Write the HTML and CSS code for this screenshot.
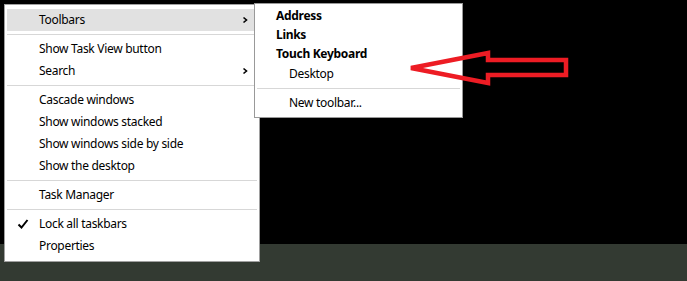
FILE: index.html
```html
<!DOCTYPE html>
<html lang="en">
<head>
    <meta charset="UTF-8">
    <meta name="viewport" content="width=device-width, initial-scale=1.0">
    <title>Taskbar Context Menu</title>
    <link rel="stylesheet" href="styles.css">
</head>
<body>
    <div class="screen">
        <div class="desktop"></div>
        <div class="taskbar"></div>

        <div class="menu main-menu">
            <div class="menu-item active">
                <span>Toolbars</span>
                <svg class="chevron" width="6" height="8" viewBox="0 0 6 8"><path d="M1.5 1.5 L4.5 4 L1.5 6.5" fill="none" stroke="#000" stroke-width="1.6"/></svg>
            </div>
            <div class="separator"></div>
            <div class="menu-item"><span>Show Task View button</span></div>
            <div class="menu-item">
                <span>Search</span>
                <svg class="chevron" width="6" height="8" viewBox="0 0 6 8"><path d="M1.5 1.5 L4.5 4 L1.5 6.5" fill="none" stroke="#000" stroke-width="1.6"/></svg>
            </div>
            <div class="separator"></div>
            <div class="menu-item"><span>Cascade windows</span></div>
            <div class="menu-item"><span>Show windows stacked</span></div>
            <div class="menu-item"><span>Show windows side by side</span></div>
            <div class="menu-item"><span>Show the desktop</span></div>
            <div class="separator"></div>
            <div class="menu-item"><span>Task Manager</span></div>
            <div class="separator"></div>
            <div class="menu-item">
                <svg class="check" width="12" height="12" viewBox="0 0 12 12"><path d="M1.5 6.5 L4.5 9.5 L10.5 2" fill="none" stroke="#000" stroke-width="2"/></svg>
                <span>Lock all taskbars</span>
            </div>
            <div class="menu-item"><span>Properties</span></div>
        </div>

        <div class="menu sub-menu">
            <div class="sub-item bold">Address</div>
            <div class="sub-item bold">Links</div>
            <div class="sub-item bold">Touch Keyboard</div>
            <div class="sub-item plain tall">Desktop</div>
            <div class="separator"></div>
            <div class="sub-item plain tall">New toolbar...</div>
        </div>

        <svg class="arrow" width="687" height="281" viewBox="0 0 687 281">
            <polygon points="411,68 488,53 488,60 566,60 566,75 488,75 488,83"
                     fill="none" stroke="#ed1c24" stroke-width="4.5"/>
        </svg>
    </div>
</body>
</html>
```

FILE: styles.css
```css
body {
    margin: 0;
    background-color: #000;
}
.screen {
    position: relative;
    width: 687px;
    height: 281px;
    display: flex;
    flex-direction: column;
    overflow: hidden;
    font-family: "Noto Sans", "Open Sans", sans-serif;
    font-size: 12px;
    letter-spacing: -0.3px;
    color: #000;
}
.desktop {
    height: 244px;
    background-color: #000;
}
.taskbar {
    flex: 1;
    background-color: #333a32;
}
.menu {
    position: absolute;
    background-color: #fff;
    border: 1px solid #a0a0a0;
    box-sizing: border-box;
}
.main-menu {
    left: 4px;
    top: 4px;
    width: 256px;
    height: 258px;
    padding: 4px 2px;
}
.sub-menu {
    left: 254px;
    top: 3px;
    width: 209px;
    height: 115px;
    padding: 2px 2px 3px 2px;
    border-color: #999;
}
.menu-item {
    position: relative;
    display: flex;
    align-items: center;
    height: 22px;
    padding-left: 32px;
    padding-bottom: 1px;
    box-sizing: border-box;
}
.menu-item.active {
    background-color: #e1e1e1;
}
.menu-item .chevron {
    position: absolute;
    right: 9px;
    top: 7px;
}
.menu-item .check {
    position: absolute;
    left: 10px;
    top: 5px;
}
.separator {
    height: 1px;
    margin: 3px 0;
    background-color: #d7d7d7;
}
.sub-item {
    display: flex;
    align-items: center;
    height: 19px;
    padding-bottom: 1px;
    box-sizing: border-box;
}
.sub-item.bold {
    font-weight: bold;
    padding-left: 19px;
}
.sub-item.plain {
    padding-left: 32px;
}
.sub-item.tall {
    height: 22px;
}
.arrow {
    position: absolute;
    left: 0;
    top: 0;
    pointer-events: none;
}
```
